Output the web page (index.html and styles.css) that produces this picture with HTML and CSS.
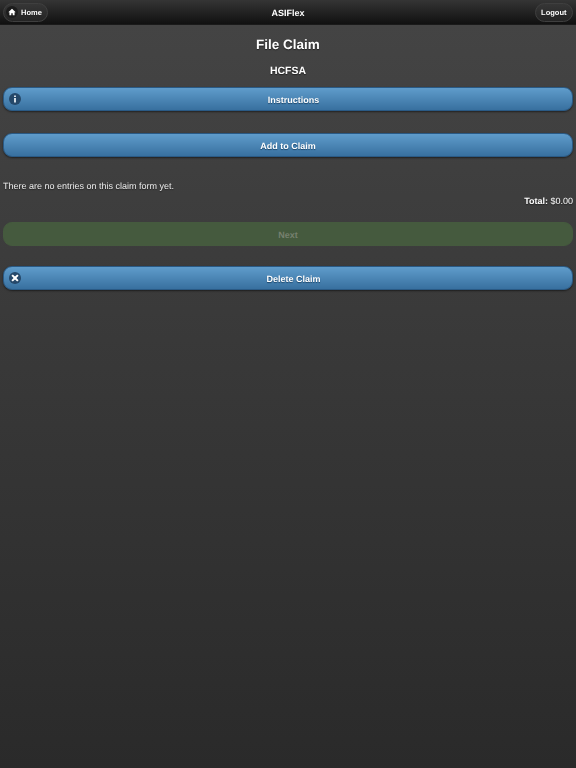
FILE: index.html
```html
<!DOCTYPE html>
<html lang="en">
<head>
<meta charset="utf-8">
<title>ASIFlex</title>
<link rel="stylesheet" href="styles.css">
</head>
<body>
<header class="bar">
  <div class="bar-side"><a class="pill pill-home"><span class="bar-icon"><svg viewBox="0 0 10 10" width="8" height="8"><path d="M5 .8 9.6 5.2H8.2V9H5.9V6.6H4.1V9H1.8V5.2H.4z" fill="#fff"/></svg></span><span class="pill-text">Home</span></a></div>
  <h1 class="bar-title">ASIFlex</h1>
  <div class="bar-side bar-side-end"><a class="pill pill-logout"><span class="pill-text">Logout</span></a></div>
</header>
<main class="content">
  <h2 class="page-title">File Claim</h2>
  <h3 class="sub-title">HCFSA</h3>
  <a class="btn btn-icon"><span class="btn-glyph"><svg viewBox="0 0 10 10" width="10" height="10"><path d="M4.1 1.6h1.8v1.5H4.1zM4.1 4h1.8v4.4H4.1z" fill="#e8eef4"/></svg></span>Instructions</a>
  <a class="btn btn-add">Add to Claim</a>
  <p class="note">There are no entries on this claim form yet.</p>
  <p class="total"><b>Total:</b> $0.00</p>
  <a class="btn btn-disabled">Next</a>
  <a class="btn btn-icon btn-delete"><span class="btn-glyph"><svg viewBox="0 0 10 10" width="10" height="10"><path d="M2.8 1.4 5 3.6l2.2-2.2 1.4 1.4L6.4 5l2.2 2.2-1.4 1.4L5 6.4 2.8 8.6 1.4 7.2 3.6 5 1.4 2.8z" fill="#fff"/></svg></span>Delete Claim</a>
</main>
</body>
</html>
```
FILE: styles.css
```css
* { box-sizing: border-box; }
html, body { height: 100%; }
body {
  margin: 0;
  min-height: 768px;
  overflow: hidden;
  font-family: "Liberation Sans", Arial, sans-serif;
  font-size: 9px;
  color: #fff;
  background: linear-gradient(#444444 0, #444444 25px, #2a2a2a 100%);
  text-rendering: geometricPrecision;
  text-shadow: 0 1px 1px #222;
}
.bar, .content { filter: blur(.3px); }
.bar {
  height: 25px;
  display: grid;
  grid-template-columns: 1fr auto 1fr;
  align-items: center;
  padding: 0 3px;
  background: linear-gradient(#353535, #111111);
  border-bottom: 1px solid #1a1a1a;
}
.bar-side { display: flex; }
.bar-side-end { justify-content: flex-end; }
.bar-title { margin: 0; padding-top: 1px; font-size: 9px; font-weight: bold; }
.pill {
  height: 19px;
  display: flex;
  align-items: center;
  gap: 3px;
  border-radius: 10px;
  border: 1px solid #3f3f3f;
  background: linear-gradient(#363636, #242424);
  font-size: 7.5px;
  font-weight: bold;
}
.pill-text { padding-top: 1px; }
.pill-home { padding: 0 5px 0 2px; }
.pill-logout { padding: 0 5.5px; }
.bar-icon {
  width: 12px;
  height: 12px;
  border-radius: 50%;
  background: #1c1c1c;
  display: flex;
  align-items: center;
  justify-content: center;
}
.content { padding: 0 3px; }
.page-title {
  margin: 0;
  padding-top: 12px;
  height: 39px;
  line-height: 16px;
  text-align: center;
  font-size: 13.5px;
}
.sub-title {
  margin: 0;
  padding-top: 1px;
  height: 23px;
  line-height: 13px;
  text-align: center;
  font-size: 10.5px;
}
.btn {
  position: relative;
  display: block;
  height: 24px;
  line-height: 24px;
  text-align: center;
  font-weight: bold;
  font-size: 9px;
  border-radius: 9px;
  border: 1px solid #2a5a85;
  background: linear-gradient(#5f9ccb, #38709f);
  box-shadow: 0 1px 2px rgba(0,0,0,.5);
  text-shadow: 0 1px 1px #1d4669;
}
.btn-icon { padding-left: 11px; }
.btn-glyph {
  position: absolute;
  left: 4.5px;
  top: 5px;
  width: 12px;
  height: 12px;
  border-radius: 50%;
  background: #25486a;
  display: flex;
  align-items: center;
  justify-content: center;
}
.btn-add { margin-top: 22px; }
.note { margin: 23px 0 0; line-height: 12px; font-size: 9px; color: #eee; }
.total { margin: 3px 0 0; line-height: 12px; font-size: 9px; text-align: right; }
.btn-disabled {
  margin-top: 15px;
  color: #76806f;
  background: #455a3e;
  border-color: #455a3e;
  box-shadow: none;
  text-shadow: none;
}
.btn-delete { margin-top: 20px; }
```
